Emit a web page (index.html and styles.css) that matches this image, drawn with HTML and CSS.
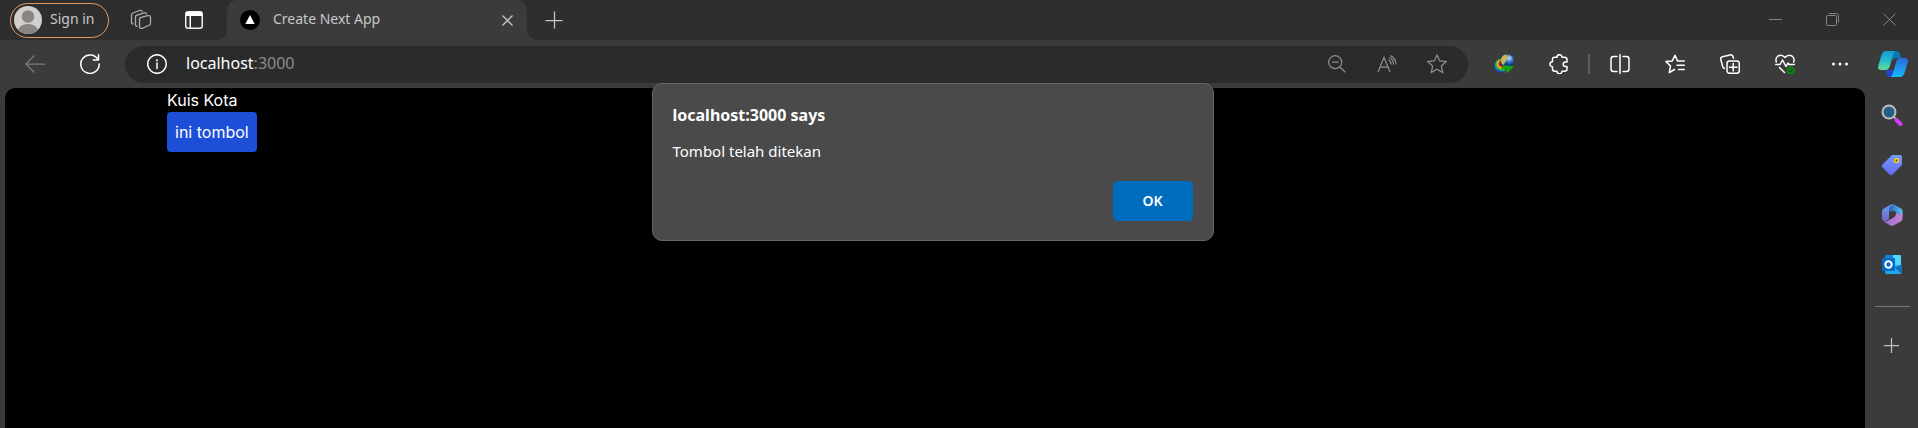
FILE: index.html
```html
<!DOCTYPE html>
<html lang="en">
<head>
<meta charset="utf-8">
<title>Create Next App</title>
<link rel="stylesheet" href="styles.css">
</head>
<body>
<header class="tabstrip">
  <button class="profile" type="button">
    <svg class="avatar" viewBox="0 0 28 28" width="28" height="28" aria-hidden="true">
      <defs><clipPath id="face"><circle cx="14" cy="14" r="14"/></clipPath></defs>
      <g clip-path="url(#face)"><rect width="28" height="28" fill="#d2d0ce"/><circle cx="14" cy="10.500" r="6.300" fill="#8a8683"/><ellipse cx="14" cy="26" rx="10.500" ry="8" fill="#8a8683"/></g>
    </svg>
    <span>Sign in</span>
  </button>
  <button class="strip-button" type="button" aria-label="Workspaces">
    <svg class="line dim" viewBox="0 0 22 22" width="22" height="22"><path d="M10.500 8.600 17.500 6.700Q20.500 6 20.500 8.500V14.500Q20.500 15.600 19.500 16L12.500 19.200Q9.500 20.200 9.500 17.500V10.200Q9.500 9 10.500 8.600Z"/><path d="M7.500 17.300Q5.500 17.500 5.500 15.500V8Q5.500 6.800 6.500 6.400L14 3.800Q16.300 3.300 16.500 5.500M3.500 15Q1.500 15 1.500 13V6Q1.500 4.600 3 4L9.500 1.500Q12 .8 12.500 2.800"/></svg>
  </button>
  <button class="strip-button" type="button" aria-label="Tab actions">
    <svg viewBox="0 0 18 18" width="18" height="18"><rect x=".75" y=".75" width="16.500" height="16.500" rx="2.500" fill="none" stroke="#eee" stroke-width="1.500"/><path d="M1 1H17V5H1ZM4.500 5H6V17H4.500Z" fill="#fff"/></svg>
  </button>
  <div class="tab">
    <svg viewBox="0 0 20 20" width="20" height="20" aria-hidden="true"><circle cx="10" cy="10" r="10" fill="#000"/><path d="M10 5 14.700 14H5.300Z" fill="#fff"/></svg>
    <span class="tab-title">Create Next App</span>
    <button class="tab-close" type="button" aria-label="Close tab"><svg class="line" viewBox="0 0 11 11" width="11" height="11"><path d="M.5.500 10.500 10.500M10.500.500.500 10.500"/></svg></button>
  </div>
  <button class="new-tab" type="button" aria-label="New tab"><svg class="line" viewBox="0 0 18 18" width="18" height="18"><path d="M.5 9.500H17.500M9.500.500V17.500"/></svg></button>
  <div class="window-controls">
    <button type="button" aria-label="Minimize"><svg class="line" viewBox="0 0 13 13" width="13" height="13"><path d="M0 6.500H13"/></svg></button>
    <button type="button" aria-label="Restore"><svg class="line" viewBox="0 0 13 13" width="13" height="13"><rect x=".5" y="2.500" width="10" height="10" rx="1"/><path d="M3 .5H10.500Q12.500.500 12.500 2.500V9.500"/></svg></button>
    <button type="button" aria-label="Close"><svg class="line" viewBox="0 0 13 13" width="13" height="13"><path d="M.5.500 12.500 12.500M12.500.500.500 12.500"/></svg></button>
  </div>
</header>

<nav class="toolbar">
  <button class="tool faded" type="button" aria-label="Back"><svg class="line" viewBox="0 0 20 18" width="20" height="18"><path d="M.8 9H20M9.500.5.800 9 9.500 17.500"/></svg></button>
  <button class="tool" type="button" aria-label="Refresh"><svg class="line bold" viewBox="0 0 20 20" width="20" height="20"><path d="M18.200 6A9.200 9.200 0 1 0 19.200 10M18.500.8V6H13.200"/></svg></button>
  <div class="address">
    <button class="site-info" type="button" aria-label="Site information"><svg class="line bold" viewBox="0 0 20 20" width="20" height="20"><circle cx="10" cy="10" r="9.300"/><path d="M10 9V14.500"/><circle cx="10" cy="6.300" r=".4"/></svg></button>
    <span class="url">localhost<span class="port">:3000</span></span>
    <button class="address-tool" type="button" aria-label="Zoom out"><svg class="line" viewBox="0 0 18 18" width="18" height="18"><circle cx="7.200" cy="7.200" r="6.500"/><path d="M4 7.200H10.500M12 12 17.300 17.300"/></svg></button>
    <button class="address-tool" type="button" aria-label="Read aloud"><svg class="line" viewBox="0 0 20 18" width="20" height="18"><path d="M1 17 7 2.500 13 17M3.300 12H10.800M11.500 4.500Q14 6 14 9.500M12.500 2.500Q16.500 4.500 16.500 9.500M13.500.600Q19 3.500 19 9.500"/></svg></button>
    <button class="address-tool" type="button" aria-label="Add to favorites"><svg class="line" viewBox="0 0 20 20" width="20" height="20"><path d="M10 1 12.700 6.900 19.200 7.600 14.300 12 15.700 18.600 10 15.300 4.300 18.600 5.700 12 .8 7.600 7.300 6.900Z"/></svg></button>
  </div>
  <button class="tool" type="button" aria-label="Download manager">
    <svg viewBox="0 0 20 20" width="20" height="20"><defs><radialGradient id="globe" cx=".65" cy=".3"><stop offset="0" stop-color="#c4e4ff"/><stop offset=".5" stop-color="#4384d6"/><stop offset="1" stop-color="#153d83"/></radialGradient></defs><path d="M7 6Q1 8 1.200 12.500 2 18 11 17.500" fill="none" stroke="#184ed4" stroke-width="2"/><path d="M7 5.500Q2 7 2 11.500 3 16 11 16" fill="none" stroke="#22c032" stroke-width="2"/><path d="M7 6Q3.200 8 3.700 11 5 14.500 10 14.500" fill="none" stroke="#ffd72a" stroke-width="1.500"/><path d="M7.500 6Q4.500 8 5 10.500 6 13 9.500 13" fill="none" stroke="#f02818" stroke-width="1.500"/><circle cx="13.200" cy="6.800" r="6.600" fill="url(#globe)"/><path d="M7 6Q7.500 1 12 .5L14 3 12 7 9.500 11Q6.500 9 7 6Z" fill="#c9b654"/><path d="M8.500 11 20 12.500 12.500 19.500 12 15.500 6 15.500Q9.500 14 8.500 11Z" fill="#10a50e"/></svg>
  </button>
  <button class="tool" type="button" aria-label="Extensions"><svg class="line bold" viewBox="0 0 20 20" width="20" height="20"><path d="M5 3.200H8A2.500 2.500 0 0 1 13 3.200H15.500Q18 3.200 18 5.500V8H16.500A2.300 2.300 0 0 0 16.500 12.600H18V15Q18 17.200 15.500 17.200H13A2.500 2.500 0 0 1 8 17.200H5.500Q3.500 17.200 3.500 15V12.800A2.500 2.500 0 0 1 3.500 7.800V5Q3.500 3.200 5 3.200Z"/></svg></button>
  <span class="separator"></span>
  <button class="tool" type="button" aria-label="Split screen"><svg class="line bold" viewBox="0 0 20 20" width="20" height="20"><path d="M7 2.500H3.500Q1 2.500 1 5V15Q1 17.500 3.500 17.500H7M13 2.500H16.500Q19 2.500 19 5V15Q19 17.500 16.500 17.500H13M10 .7V19.300"/></svg></button>
  <button class="tool" type="button" aria-label="Favorites"><svg class="line bold" viewBox="0 0 20 20" width="20" height="20"><path d="M13.500 6.900H12.500L10 1.200 7.300 6.900 1 7.600 5.500 12 4.300 18.600 9.500 15.500M13.500 7H19.300M12 11.200H19.300M13.500 15.500H19.300"/></svg></button>
  <button class="tool" type="button" aria-label="Collections"><svg class="line bold" viewBox="0 0 20 20" width="20" height="20"><rect x="7" y="7" width="12.300" height="12.300" rx="2.500"/><path d="M13.200 9.500V17M9.500 13.200H17M4.500 14.500Q3 14 2.500 12L.8 5.500Q.3 3.300 2.500 2.700L10 .9Q12.300.500 13 2.500L13.400 4.200"/></svg></button>
  <button class="tool" type="button" aria-label="Browser essentials"><svg class="line bold" viewBox="0 0 20 20" width="20" height="20"><path d="M1.300 8Q0 4 3 2 7 0 10 3.500 13 0 17 2 20 4 18.700 8M.7 10.500H5L7.500 6 11 12.500 13 9 14 10.500H19.300M4.500 13.500 9.500 18.500"/><circle cx="15.700" cy="16.500" r="3.600" fill="#127b16" stroke="#127b16"/><path d="M14 16.700 15.200 18 17.500 15.300" stroke="#063f09" stroke-width="1"/></svg></button>
  <button class="tool" type="button" aria-label="Settings and more"><svg viewBox="0 0 18 4" width="18" height="4"><g fill="#fff"><circle cx="2.500" cy="2" r="1.500"/><circle cx="9" cy="2" r="1.500"/><circle cx="15.500" cy="2" r="1.500"/></g></svg></button>
  <button class="copilot" type="button" aria-label="Copilot">
    <svg viewBox="0 0 30 28" width="30" height="28"><defs><linearGradient id="cpA" x2="0" y2="1"><stop stop-color="#159bd8"/><stop offset=".5" stop-color="#25bbc9"/><stop offset="1" stop-color="#65dc9b"/></linearGradient><linearGradient id="cpB" x2="0" y2="1"><stop stop-color="#2869da"/><stop offset="1" stop-color="#18b9fb"/></linearGradient></defs><path d="M14 1H19Q21 1 22 4L23 8H18Q15 8 14 12Z" fill="#0879ac"/><path d="M8 20H15L17 27H12Q9 27 8.500 24Z" fill="#2146ce"/><path d="M8 1H18Q16 1 15 5L11.500 17Q10.500 20 7.500 20H3Q-1 20 .5 15L3.500 5Q5 1 8 1Z" fill="url(#cpA)"/><path d="M22 8H27Q31 8 29.500 13L26.500 23Q25 27 22 27H12Q14 27 15 23L18.500 11Q19.500 8 22 8Z" fill="url(#cpB)"/></svg>
  </button>
</nav>

<div class="workspace">
  <div class="viewport">
    <main class="page">
      <div class="container">
        <p class="heading">Kuis Kota</p>
        <button class="page-button" type="button">ini tombol</button>
      </div>
    </main>
    <div class="dialog" role="alertdialog" aria-labelledby="dialog-title" aria-describedby="dialog-message">
      <h1 class="dialog-title" id="dialog-title">localhost:3000 says</h1>
      <p class="dialog-message" id="dialog-message">Tombol telah ditekan</p>
      <button class="ok" type="button">OK</button>
    </div>
  </div>
  <aside class="sidebar">
    <button type="button" aria-label="Search"><svg viewBox="0 0 22 22" width="22" height="22"><path d="M13 13 16 16" stroke="#aaa" stroke-width="2"/><path d="M15.500 16 19.500 20" stroke="#d73af5" stroke-width="4" stroke-linecap="round"/><circle cx="8" cy="8" r="6.500" fill="#245f82" stroke="#bdbdbd" stroke-width="2"/></svg></button>
    <button type="button" aria-label="Shopping"><svg viewBox="0 0 22 22" width="22" height="22"><defs><linearGradient id="tag" x2="0" y2="1"><stop stop-color="#719cff"/><stop offset="1" stop-color="#6467ef"/></linearGradient></defs><path d="M11 1H19Q21 1 21 3V11L11.500 20.500Q10 22 8.500 20.500L1.500 13.500Q0 12 1.500 10.500Z" fill="url(#tag)"/><circle cx="15.500" cy="6.500" r="1.900" fill="#454545" stroke="#f8ca12" stroke-width="1.800"/></svg></button>
    <button type="button" aria-label="Microsoft 365"><svg viewBox="0 0 22 22" width="22" height="22"><defs><linearGradient id="mA" x2="1"><stop stop-color="#3159b5"/><stop offset="1" stop-color="#55c9f4"/></linearGradient><linearGradient id="mB" x2="1"><stop stop-color="#8f6fd0"/><stop offset="1" stop-color="#c583d6"/></linearGradient><linearGradient id="mC" x2="0" y2="1"><stop stop-color="#63a6f2"/><stop offset="1" stop-color="#7a5fc4"/></linearGradient></defs><path d="M12 0 20 4.500Q21.500 5.500 21.500 7V12L13.500 7.300Q11 6.500 8 8.500V4Q9 1 12 0Z" fill="url(#mA)"/><path d="M12 0Q8 2 8 6V15L4.500 17.200Q1 17 1 14V7.500Q1 5.500 2.800 4.500L9 1Q10.500 0 12 0Z" fill="url(#mC)"/><path d="M21.500 9V14.500Q21.500 16.300 20 17.200L13 21.300Q11 22.300 9 21.300L2.500 17.500Q5 18 8 16L13.500 13Q15 12 15 8.200L19 10.500Q21 11 21.500 9Z" fill="url(#mB)"/></svg></button>
    <button type="button" aria-label="Outlook"><svg viewBox="0 0 22 22" width="22" height="22"><rect x="4" y="1" width="16" height="19" rx="1" fill="#1684d4"/><path d="M12 1H19Q20 1 20 2V11H12Z" fill="#50d9ff"/><path d="M4 11H20V20H5Z" fill="#1fa5e8"/><path d="M14 14 21 10V20Z" fill="#1270b9"/><rect x="1" y="4" width="13" height="13" rx="1" fill="#0869c8"/><circle cx="7.500" cy="10.500" r="3.200" fill="none" stroke="#fff" stroke-width="2"/></svg></button>
    <hr>
    <button type="button" aria-label="Customize"><svg class="line" viewBox="0 0 16 16" width="16" height="16"><path d="M0 7.500H15M7.500 0V15"/></svg></button>
  </aside>
</div>
</body>
</html>
```
FILE: styles.css
```css
* { box-sizing: border-box; }
body {
  margin: 0;
  min-height: 100vh;
  display: flex;
  flex-direction: column;
  background: #3b3b3b;
  color: #fff;
  font-family: "Noto Sans", "Open Sans", sans-serif;
  font-size: 14px;
  line-height: 20px;
}
button {
  margin: 0;
  padding: 0;
  border: 0;
  background: none;
  color: inherit;
  font: inherit;
}
svg { display: block; flex: none; }
.line { fill: none; stroke: currentColor; stroke-width: 1.25; }
.bold { stroke-width: 1.5; stroke-linecap: round; stroke-linejoin: round; }
.tabstrip {
  display: flex;
  align-items: center;
  height: 40px;
  padding-left: 10px;
  background: #2e2e2e;
  color: #c8c8c8;
}
.profile {
  display: flex;
  align-items: center;
  gap: 8px;
  height: 35px;
  width: 99px;
  padding-left: 3px;
  border: 1px solid #e39a61;
  border-radius: 18px;
  white-space: nowrap;
}
.strip-button {
  display: flex;
  justify-content: center;
  width: 53px;
}
.profile + .strip-button { margin-left: 5px; }
.dim { color: #b0b0b0; }
.tab {
  position: relative;
  display: flex;
  align-items: center;
  align-self: stretch;
  width: 300px;
  margin-left: 7px;
  padding: 0 14px 0 13px;
  border-radius: 10px 10px 0 0;
  background: #3b3b3b;
}
.tab::before, .tab::after {
  content: "";
  position: absolute;
  bottom: 0;
  width: 10px;
  height: 10px;
}
.tab::before { right: 100%; background: radial-gradient(circle at 0 0, transparent 10px, #3b3b3b 10px); }
.tab::after { left: 100%; background: radial-gradient(circle at 100% 0, transparent 10px, #3b3b3b 10px); }
.tab-title { flex: 1; padding: 0 0 2px 13px; }
.profile span { padding-bottom: 2px; }
.new-tab { margin-left: 18px; }
.window-controls { display: flex; margin-left: auto; padding-bottom: 2px; color: #858585; }
.window-controls button { display: flex; justify-content: center; width: 57px; }
.window-controls .line { stroke-width: 1; }
.toolbar {
  display: flex;
  align-items: center;
  height: 48px;
  padding-left: 7px;
}
.tool, .copilot {
  display: flex;
  flex: none;
  justify-content: center;
  width: 55px;
}
.copilot { width: 51px; }
.faded { color: #7d7d7d; }
.address {
  display: flex;
  flex: 1;
  align-items: center;
  height: 37px;
  margin: 0 8px;
  padding: 0 6px 0 22px;
  border-radius: 19px;
  background: #2b2b2b;
}
.url { flex: 1; padding: 0 0 2px 19px; font-size: 16px; }
.port { color: #8b8b8b; }
.address-tool { display: flex; justify-content: center; width: 50px; color: #8d8d8d; }
.separator { width: 2px; height: 20px; margin: 0 2px; background: #606060; }
.workspace { display: flex; flex: 1; }
.viewport {
  position: relative;
  display: flex;
  flex: 1;
  padding-left: 5px;
}
.page {
  flex: 1;
  border-radius: 10px 10px 0 0;
  background: #000;
  font: 16px/24px Inter, sans-serif;
}
.container { max-width: 1536px; margin: 0 auto; }
.heading { margin: 0; }
.page-button {
  display: block;
  padding: 8px;
  border-radius: 4px;
  background: #1d4ed8;
}
.dialog {
  position: absolute;
  top: -5px;
  left: 50%;
  width: 562px;
  padding: 19px 20px;
  border: 1px solid #666;
  border-radius: 10px;
  background: #4a4a4a;
  transform: translateX(-50%);
}
.dialog-title { margin: 0; font-size: 16px; line-height: 24px; }
.dialog-message { margin: 12px 0 18px; font-size: 15px; line-height: 24px; }
.ok {
  display: block;
  width: 80px;
  height: 40px;
  margin-left: auto;
  border-radius: 5px;
  background: #006cbe;
  font-weight: 600;
}
.sidebar {
  display: flex;
  flex-direction: column;
  align-items: center;
  width: 53px;
  padding: 2px 0 0 1px;
}
.sidebar button {
  display: flex;
  align-items: center;
  justify-content: center;
  width: 50px;
  height: 50px;
  color: #c0c0c0;
}
.sidebar hr {
  width: 35px;
  height: 1px;
  margin: 16px 0 14px;
  border: 0;
  background: #777;
}
```
